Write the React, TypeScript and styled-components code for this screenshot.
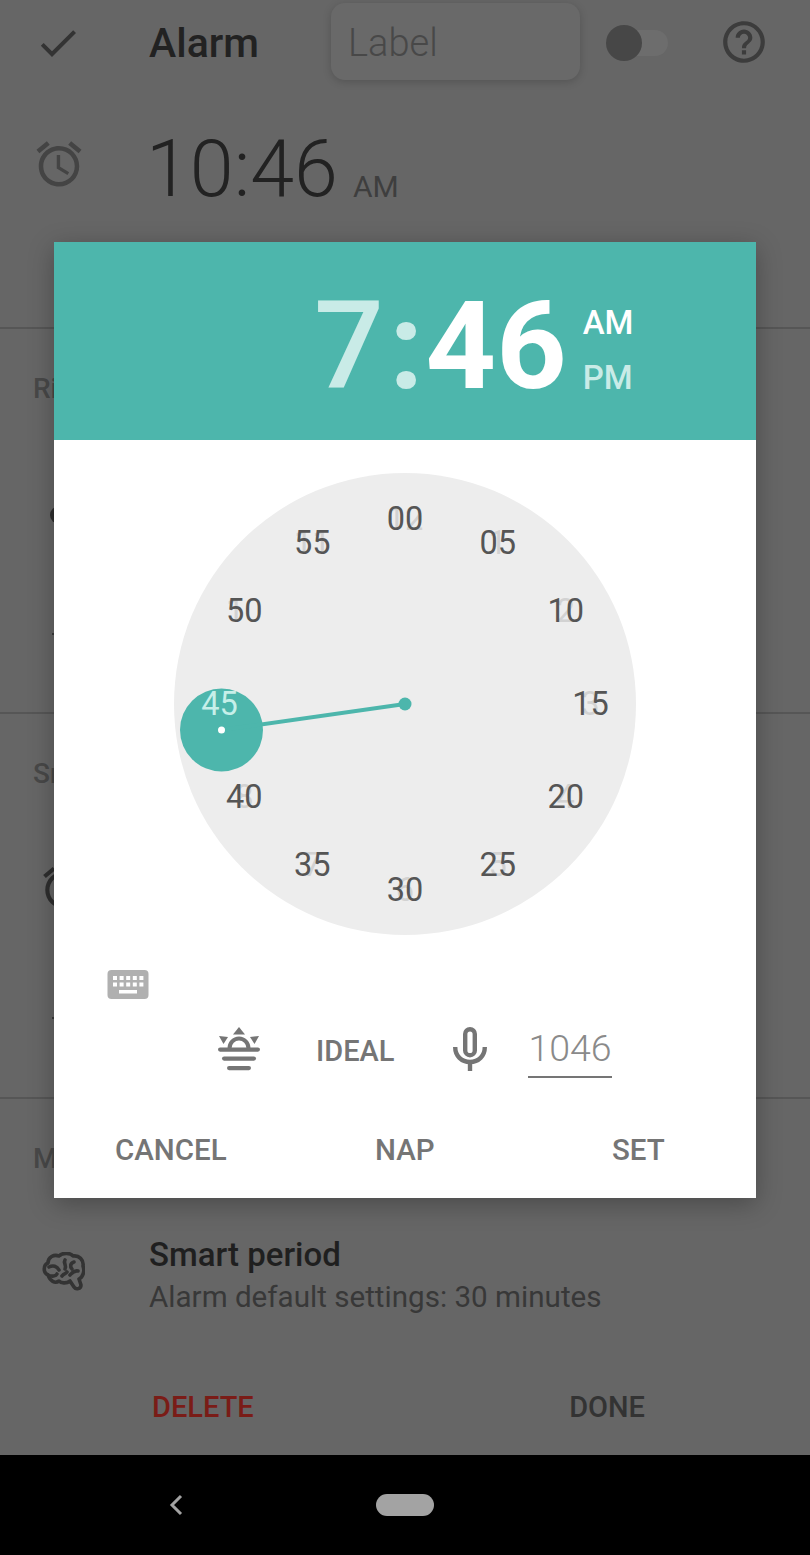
import styled, { createGlobalStyle } from 'styled-components';
import { MdCheck, MdHelpOutline, MdOutlineAccessAlarm } from 'react-icons/md';

const TEAL = '#4db6ac';
const FACE = '#ededed';
const MUTED = '#757575';
const HEADER_DIM = '#c9ebe7';

const GlobalStyle = createGlobalStyle`
  html, body {
    margin: 0;
    padding: 0;
    background: #000;
  }
  * {
    box-sizing: border-box;
  }
`;

const Screen = styled.div`
  position: relative;
  width: 810px;
  height: 1555px;
  overflow: hidden;
  font-family: Roboto, 'Liberation Sans', sans-serif;
  display: flex;
  flex-direction: column;
`;

const Page = styled.div`
  height: 1455px;
  background: #666;
  display: flex;
  flex-direction: column;
`;

const TopBar = styled.div`
  height: 85px;
  display: flex;
  align-items: center;
`;

const IconSlot = styled.div`
  width: 149px;
  padding-left: 34px;
  display: flex;
  align-items: center;
  color: #333;
  flex-shrink: 0;
`;

const Title = styled.div`
  width: 182px;
  font-size: 41px;
  font-weight: 500;
  color: #222;
`;

const LabelInput = styled.div`
  width: 249px;
  height: 77px;
  margin-top: -2px;
  padding: 3px 0 0 17px;
  display: flex;
  align-items: center;
  font-size: 38px;
  font-weight: 300;
  color: #484848;
  background: #696969;
  border-radius: 14px;
  box-shadow: 0 2px 8px rgba(0, 0, 0, 0.18);
`;

const Toggle = styled.div`
  position: relative;
  width: 62px;
  height: 26px;
  margin-left: 26px;
  border-radius: 13px;
  background: #6d6d6d;
`;

const ToggleThumb = styled.div`
  position: absolute;
  left: 0;
  top: -5px;
  width: 36px;
  height: 36px;
  border-radius: 50%;
  background: #474747;
`;

const HelpSlot = styled.div`
  margin-left: 51px;
  margin-top: -2px;
  display: flex;
  color: #3c3c3c;
`;

const TimeRow = styled.div`
  height: 244px;
  display: flex;
  align-items: flex-start;
  border-bottom: 2px solid #565656;
`;

const TimeIcon = styled(IconSlot)`
  padding: 52px 0 0 32px;
  color: #444;
`;

const TimeValue = styled.div`
  font-size: 79px;
  font-weight: 300;
  line-height: 94px;
  margin: 37px 0 0 -3px;
  color: #222;
`;

const TimeSuffix = styled.div`
  font-size: 30px;
  line-height: 34px;
  margin: 85px 0 0 15px;
  color: #3e3e3e;
`;

const Section = styled.section`
  height: 385px;
  padding: 44px 0 0 33px;
  border-bottom: 2px solid #565656;
`;

const SectionLabel = styled.div`
  font-size: 28px;
  font-weight: 500;
  line-height: 32px;
  color: #484848;
`;

const RingtoneDot = styled.div`
  width: 18px;
  height: 18px;
  margin: 101px 0 0 17px;
  border-radius: 50%;
  background: #2e2e2e;
`;

const SnoozeIcon = styled.div`
  margin: 73px 0 0 6px;
  display: flex;
  color: #2e2e2e;
`;

const RowDash = styled.div<{ $gap: number }>`
  width: 6px;
  height: 2px;
  margin: ${({ $gap }) => $gap}px 0 0 19px;
  background: #3a3a3a;
`;

const SmartSection = styled.section`
  flex: 1;
  padding-top: 44px;
`;

const SmartLabel = styled(SectionLabel)`
  padding-left: 33px;
`;

const SmartRow = styled.div`
  display: flex;
  margin-top: 60px;
`;

const BrainSlot = styled.div`
  width: 149px;
  padding: 17px 0 0 42px;
  display: flex;
  color: #333;
`;

const SmartTitle = styled.div`
  font-size: 33px;
  font-weight: 500;
  line-height: 40px;
  color: #1f1f1f;
`;

const SmartHint = styled.div`
  font-size: 29.6px;
  line-height: 44px;
  color: #383838;
`;

const PageActions = styled.div`
  display: flex;
  justify-content: space-between;
  margin-top: 72px;
  padding: 0 165px 0 152px;
`;

const PageAction = styled.div<{ $danger?: boolean }>`
  font-size: 29px;
  line-height: 33px;
  font-weight: 500;
  color: ${({ $danger }) => ($danger ? '#7a1c17' : '#333')};
`;

const NavBar = styled.div`
  position: relative;
  height: 100px;
  background: #000;
  display: flex;
  align-items: center;
  justify-content: center;
`;

const NavBack = styled.svg`
  position: absolute;
  left: 168px;
  top: 38px;
`;

const NavPill = styled.div`
  width: 58px;
  height: 22px;
  border-radius: 11px;
  background: #a3a3a3;
`;

const Dialog = styled.div`
  position: absolute;
  left: 54px;
  top: 242px;
  width: 702px;
  height: 956px;
  background: #fff;
  box-shadow: 0 6px 24px rgba(0, 0, 0, 0.28);
  display: flex;
  flex-direction: column;
`;

const DialogHeader = styled.div`
  height: 198px;
  padding: 0 0 0 260px;
  background: ${TEAL};
  display: flex;
  align-items: center;
  color: #fff;
`;

const HourDigit = styled.div`
  font-size: 123px;
  font-weight: 500;
  line-height: 198px;
  padding-top: 10px;
  color: ${HEADER_DIM};
`;

const BigColon = styled(HourDigit)`
  margin: 0 2px 0 5px;
  font-weight: 700;
`;

const MinuteDigits = styled(HourDigit)`
  font-weight: 700;
  color: #fff;
`;

const Meridiem = styled.div`
  margin: 18px 0 0 16px;
  display: flex;
  flex-direction: column;
  gap: 20px;
`;

const MeridiemOption = styled.div<{ $dim?: boolean }>`
  font-size: 33px;
  line-height: 35px;
  font-weight: 500;
  color: ${({ $dim }) => ($dim ? HEADER_DIM : '#fff')};
`;

const ClockArea = styled.div`
  padding-top: 33px;
  display: flex;
  justify-content: center;
`;

const ClockFace = styled.div`
  position: relative;
  width: 462px;
  height: 462px;
  border-radius: 50%;
  background: ${FACE};
`;

const HandLayer = styled.svg`
  position: absolute;
  inset: 0;
`;

const ClockNumber = styled.div<{ $active?: boolean }>`
  position: absolute;
  transform: translate(-50%, -50%);
  font-size: 32.5px;
  line-height: 38px;
  color: ${({ $active }) => ($active ? '#c6efe9' : '#555')};
`;

const GhostHour = styled.span`
  position: absolute;
  left: 50%;
  top: 50%;
  transform: translate(-50%, -50%);
  white-space: nowrap;
  color: #d2d2d2;
`;

const NumberText = styled.span`
  position: relative;
`;

const KeyboardRow = styled.div`
  margin-top: 35px;
  padding-left: 53px;
  display: flex;
`;

const SuggestRow = styled.div`
  margin-top: 20px;
  padding-left: 164px;
  height: 60px;
  display: flex;
  align-items: center;
  color: ${MUTED};
`;

const IdealLabel = styled.div`
  margin: 4px 59px 0 56px;
  font-size: 29px;
  font-weight: 500;
`;

const MicSlot = styled.div`
  display: flex;
  margin-right: 41px;
`;

const TimeField = styled.div`
  width: 84px;
  height: 57px;
  margin-top: 1px;
  font-size: 37.5px;
  font-weight: 300;
  line-height: 55px;
  color: #8a8a8a;
  border-bottom: 2px solid ${MUTED};
`;

const DialogActions = styled.div`
  margin-top: auto;
  height: 98px;
  padding: 2px 0 0 61px;
  display: grid;
  grid-template-columns: 260px 237px auto;
  justify-content: start;
  align-items: center;
`;

const DialogAction = styled.div`
  font-size: 29.5px;
  font-weight: 500;
  color: ${MUTED};
`;

const CENTER = 231;
const RADIUS = 185.5;
const MINUTES = ['00', '05', '10', '15', '20', '25', '30', '35', '40', '45', '50', '55'];
const HOURS = ['12', '1', '2', '3', '4', '5', '6', '7', '8', '', '10', '11'];

function KeyboardIcon() {
  const keys = [0, 1, 2, 3, 4];
  return (
    <svg width="42" height="29" viewBox="0 0 42 29">
      <rect x="0.5" y="0" width="41" height="29" rx="4" fill="#b0b0b0" />
      {keys.map((k) => (
        <rect key={`a${k}`} x={6 + k * 6.6} y="6" width="4" height="4" fill="#fff" />
      ))}
      {keys.map((k) => (
        <rect key={`b${k}`} x={6 + k * 6.6} y="12.5" width="4" height="4" fill="#fff" />
      ))}
      <rect x="12" y="20" width="18" height="3.5" fill="#fff" />
    </svg>
  );
}

function SunriseIcon() {
  return (
    <svg width="42" height="44" viewBox="0 0 42 44" fill={MUTED}>
      <path d="M21 0l6 7.5H15z" />
      <path d="M1 9l9 1-4.5 7z" />
      <path d="M41 9l-9 1 4.5 7z" />
      <path d="M11.5 21.5a9.5 10 0 0 1 19 0" fill="none" stroke={MUTED} strokeWidth="4" />
      <rect x="0" y="20.5" width="42" height="4.2" rx="2.1" />
      <rect x="4" y="29.5" width="34" height="4.2" rx="2.1" />
      <rect x="9" y="39" width="24" height="4.2" rx="2.1" />
    </svg>
  );
}

function MicIcon() {
  return (
    <svg width="34" height="44" viewBox="0 0 34 44" fill="none" stroke={MUTED} strokeWidth="4.4">
      <rect x="12.2" y="2.2" width="9.6" height="26" rx="4.8" />
      <path d="M2.2 20c0 9 6.3 15 14.8 15s14.8-6 14.8-15" />
      <path d="M17 35v9" />
    </svg>
  );
}

function BrainIcon() {
  return (
    <svg
      width="43"
      height="40"
      viewBox="0 0 43 40"
      fill="none"
      stroke="currentColor"
      strokeWidth="3.6"
      strokeLinecap="round"
      strokeLinejoin="round"
    >
      <path d="M6 23C1 21 1 13 6 11C6 5 12 2 17 4C21 0 29 1 31 4C37 3 42 8 41 14C43 19 41 25 37 27L39 33C39 37 34 38 32 35L28 29C24 32 19 31 17 29C13 32 8 29 6 23Z" />
      <path d="M7 15C11 13 15 14 17 18" />
      <path d="M6 23C10 25 14 24 15 22" />
      <path d="M23 8C21 11 25 13 23 17" />
      <path d="M32 10C28 11 28 15 30 17" />
      <path d="M36 19C32 18 30 21 28 23" />
      <path d="M20 24C22 21 24 22 25 20" />
    </svg>
  );
}

export default function App() {
  return (
    <Screen>
      <GlobalStyle />
      <Page>
        <TopBar>
          <IconSlot>
            <MdCheck size={48} />
          </IconSlot>
          <Title>Alarm</Title>
          <LabelInput>Label</LabelInput>
          <Toggle>
            <ToggleThumb />
          </Toggle>
          <HelpSlot>
            <MdHelpOutline size={50} />
          </HelpSlot>
        </TopBar>
        <TimeRow>
          <TimeIcon>
            <MdOutlineAccessAlarm size={54} />
          </TimeIcon>
          <TimeValue>10:46</TimeValue>
          <TimeSuffix>AM</TimeSuffix>
        </TimeRow>
        <Section>
          <SectionLabel>Ringtone</SectionLabel>
          <RingtoneDot />
          <RowDash $gap={109} />
        </Section>
        <Section>
          <SectionLabel>Snooze</SectionLabel>
          <SnoozeIcon>
            <MdOutlineAccessAlarm size={50} />
          </SnoozeIcon>
          <RowDash $gap={104} />
        </Section>
        <SmartSection>
          <SmartLabel>More</SmartLabel>
          <SmartRow>
            <BrainSlot>
              <BrainIcon />
            </BrainSlot>
            <div>
              <SmartTitle>Smart period</SmartTitle>
              <SmartHint>Alarm default settings: 30 minutes</SmartHint>
            </div>
          </SmartRow>
          <PageActions>
            <PageAction $danger>DELETE</PageAction>
            <PageAction>DONE</PageAction>
          </PageActions>
        </SmartSection>
      </Page>
      <NavBar>
        <NavBack width="16" height="24" viewBox="0 0 16 24">
          <path d="M13 3L4 12l9 9" fill="none" stroke="#a3a3a3" strokeWidth="3" />
        </NavBack>
        <NavPill />
      </NavBar>
      <Dialog>
        <DialogHeader>
          <HourDigit>7</HourDigit>
          <BigColon>:</BigColon>
          <MinuteDigits>46</MinuteDigits>
          <Meridiem>
            <MeridiemOption>AM</MeridiemOption>
            <MeridiemOption $dim>PM</MeridiemOption>
          </Meridiem>
        </DialogHeader>
        <ClockArea>
          <ClockFace>
            <HandLayer width="462" height="462" viewBox="0 0 462 462">
              <circle cx={47.5} cy={257} r={41.5} fill={TEAL} />
              <line x1={CENTER} y1={CENTER} x2={47.5} y2={257} stroke={TEAL} strokeWidth="4" />
              <circle cx={CENTER} cy={CENTER} r={6.5} fill={TEAL} />
              <circle cx={47.5} cy={257} r={3.5} fill="#fff" />
            </HandLayer>
            {MINUTES.map((minute, i) => {
              const angle = (i * Math.PI) / 6;
              const x = CENTER + RADIUS * Math.sin(angle);
              const y = CENTER - RADIUS * Math.cos(angle);
              return (
                <ClockNumber key={minute} $active={minute === '45'} style={{ left: x, top: y }}>
                  {HOURS[i] && <GhostHour>{HOURS[i]}</GhostHour>}
                  <NumberText>{minute}</NumberText>
                </ClockNumber>
              );
            })}
          </ClockFace>
        </ClockArea>
        <KeyboardRow>
          <KeyboardIcon />
        </KeyboardRow>
        <SuggestRow>
          <SunriseIcon />
          <IdealLabel>IDEAL</IdealLabel>
          <MicSlot>
            <MicIcon />
          </MicSlot>
          <TimeField>1046</TimeField>
        </SuggestRow>
        <DialogActions>
          <DialogAction>CANCEL</DialogAction>
          <DialogAction>NAP</DialogAction>
          <DialogAction>SET</DialogAction>
        </DialogActions>
      </Dialog>
    </Screen>
  );
}
